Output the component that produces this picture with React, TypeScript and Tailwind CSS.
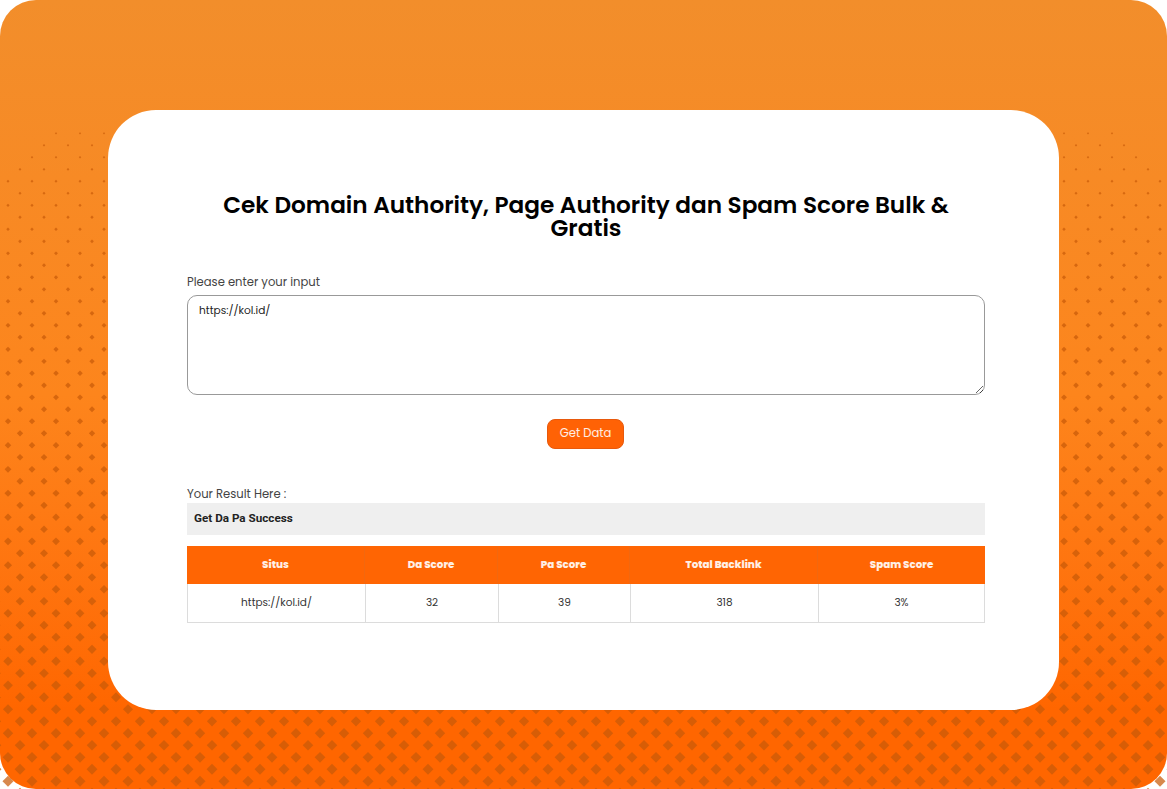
const FONT = "font-['Poppins','Inter',sans-serif]"

// staggered diamonds that grow toward the bottom of the page
function Pattern() {
  const items = []
  for (let row = 0; row < 56; row++) {
    const y = 133.3 + row * 12
    const half = 1.1 + ((y - 133) / 570) * 3.9
    const offset = row % 2 === 0 ? 8 : 20
    for (let x = offset - 24; x < 1190; x += 24) {
      // the first rows fan out from the card corners
      if (x < 56 - row * 12 || x > 1112 + row * 12) continue
      items.push(
        <polygon
          key={`${row}-${x}`}
          points={`${x},${y - half} ${x + half},${y} ${x},${y + half} ${x - half},${y}`}
        />
      )
    }
  }
  return (
    <svg className="absolute inset-0 h-full w-full" viewBox="0 0 1167 789" fill="#c85a08" fillOpacity="0.72">
      {items}
    </svg>
  )
}

const columns = [
  { label: "Situs", value: "https://kol.id/", width: "w-[178px]" },
  { label: "Da Score", value: "32", width: "w-[133px]" },
  { label: "Pa Score", value: "39", width: "w-[132px]" },
  { label: "Total Backlink", value: "318", width: "w-[188px]" },
  { label: "Spam Score", value: "3%", width: "flex-1" },
]

export default function App() {
  return (
    <div className={`relative h-[789px] w-[1167px] overflow-hidden bg-white ${FONT}`}>
      <div className="absolute inset-0 rounded-[36px] bg-gradient-to-b from-[#f28e2b] via-[#fd851c] via-50% to-[#ff6600] to-90%" />
      <Pattern />
      <div className="relative flex h-full items-start justify-center pt-[110px]">
        <main className="h-[600px] w-[951px] rounded-[48px] bg-white pt-[84px] pr-[74px] pl-[79px]">
          <h1 className="mx-auto w-[760px] text-center text-[23.2px] leading-[23px] font-semibold text-black">
            Cek Domain Authority, Page Authority dan Spam Score Bulk &amp; Gratis
          </h1>

          <label className="mt-[33px] block text-[11.6px] leading-[18px] text-[#444]">Please enter your input</label>
          <textarea
            readOnly
            defaultValue="https://kol.id/"
            className="mt-[4px] block h-[100px] w-full rounded-[10px] border border-[#999] px-[11px] py-[7px] text-[10.6px] leading-[16px] text-[#222] outline-none"
          />

          <div className="mt-[24px] flex justify-center pr-[1px]">
            <button className="h-[30px] w-[77px] rounded-[8px] border border-[#e8590c] bg-[#ff6205] text-[11.6px] text-white/90">
              Get Data
            </button>
          </div>

          <p className="mt-[36px] text-[11.6px] leading-[18px] text-[#444]">Your Result Here :</p>
          <div className="flex h-[32px] items-center bg-[#efefef] px-[7px] font-['Roboto',sans-serif] text-[11.7px] font-bold text-[#222]">
            Get Da Pa Success
          </div>

          <div className="mt-[11px]">
            <div className="flex h-[38px] bg-[#ff6503]">
              {columns.map((col, i) => (
                <div
                  key={col.label}
                  className={`flex items-center justify-center text-[10.3px] font-extrabold text-white/90 ${col.width} ${i < 4 ? "border-r border-[#f2680f]" : ""}`}
                >
                  {col.label}
                </div>
              ))}
            </div>
            <div className="flex h-[39px] border-x border-b border-[#dcdcdc]">
              {columns.map((col, i) => (
                <div
                  key={col.label}
                  className={`flex items-center justify-center text-[10.5px] text-[#333] ${col.width} ${i < 4 ? "border-r border-[#dcdcdc]" : ""}`}
                >
                  {col.value}
                </div>
              ))}
            </div>
          </div>
        </main>
      </div>
    </div>
  )
}
